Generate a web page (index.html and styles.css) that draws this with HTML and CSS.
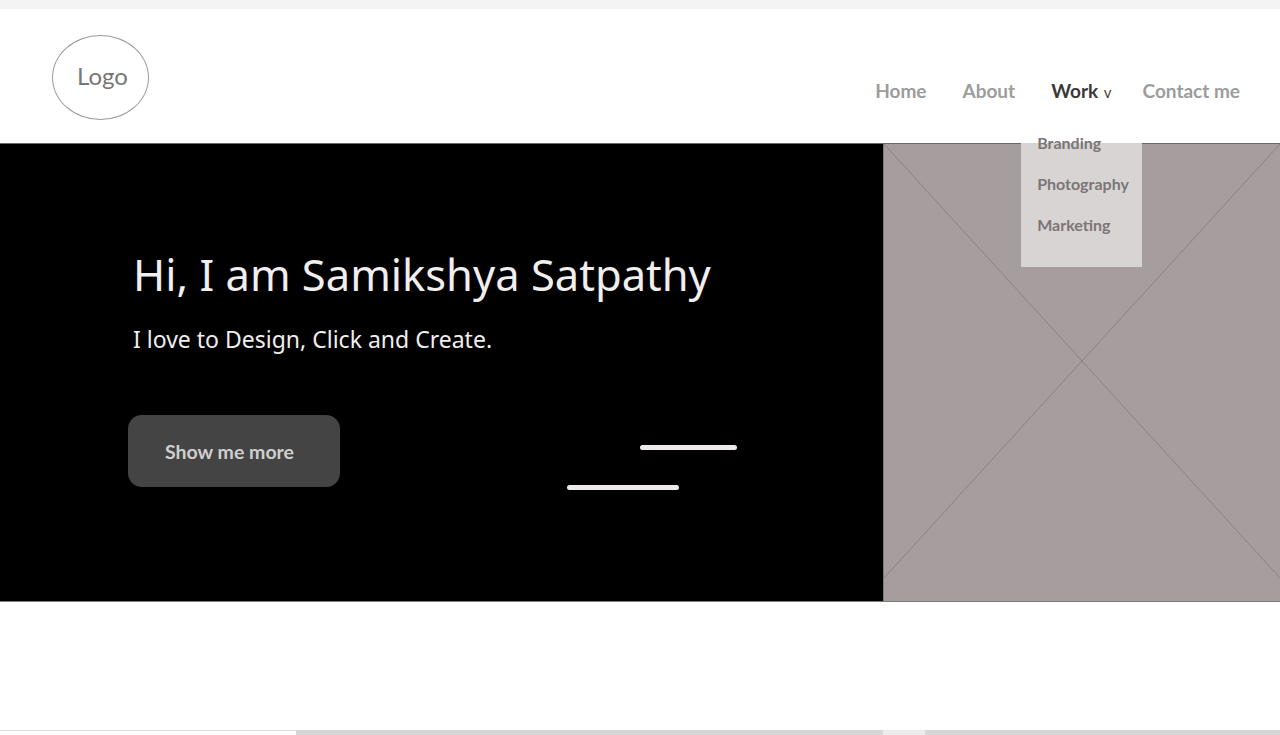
FILE: index.html
```html
<!DOCTYPE html>
<html lang="en">
<head>
<meta charset="utf-8">
<title>Samikshya Satpathy</title>
<link rel="stylesheet" href="styles.css">
</head>
<body>
<div class="topstrip"></div>
<header class="site-header">
  <div class="logo">Logo</div>
  <nav class="nav">
    <a class="nav-link" href="#">Home</a>
    <a class="nav-link" href="#">About</a>
    <div class="nav-work">
      <a class="nav-link active" href="#">Work <span class="caret">v</span></a>
      <div class="dropdown">
        <ul class="dropdown-list">
          <li>Branding</li>
          <li>Photography</li>
          <li>Marketing</li>
        </ul>
      </div>
    </div>
    <a class="nav-link" href="#">Contact me</a>
  </nav>
</header>
<section class="hero">
  <div class="hero-text">
    <h1 class="hero-title">Hi, I am Samikshya Satpathy</h1>
    <p class="hero-sub">I love to Design, Click and Create.</p>
    <div class="hero-actions">
      <button class="btn">Show me more</button>
      <div class="dashes">
        <span class="dash dash-a"></span>
        <span class="dash dash-b"></span>
      </div>
    </div>
  </div>
  <div class="placeholder">
    <svg class="ph-x" width="396" height="434" viewBox="0 0 396 434">
      <line x1="0" y1="0" x2="396" y2="434"/>
      <line x1="396" y1="0" x2="0" y2="434"/>
    </svg>
  </div>
</section>
<section class="blank"></section>
<div class="scrolltrack">
  <span class="seg seg-a"></span>
  <span class="seg seg-b"></span>
  <span class="seg seg-c"></span>
  <span class="seg seg-d"></span>
</div>
</body>
</html>
```
FILE: styles.css
```css
* { box-sizing: border-box; }
html, body { margin: 0; padding: 0; }
body {
  background: #fff;
  font-family: "Noto Sans", "Open Sans", sans-serif;
  overflow: hidden;
}
.topstrip { height: 9px; background: #f4f4f4; }

.site-header {
  height: 134px;
  display: flex;
  justify-content: space-between;
  align-items: flex-start;
  padding: 0 40px 0 52px;
  position: relative;
  z-index: 2;
}
.logo {
  margin-top: 26px;
  width: 97px;
  height: 85px;
  border: 1px solid #9a9a9a;
  border-radius: 50%;
  display: flex;
  align-items: center;
  justify-content: center;
  font-family: "Lato", sans-serif;
  font-size: 24px;
  color: #777;
  padding: 0 0 5px 4px;
}
.nav {
  display: flex;
  align-items: baseline;
  margin-top: 68px;
}
.nav-link {
  font-family: "Lato", sans-serif;
  font-weight: 700;
  font-size: 19px;
  color: #9c9c9c;
  text-decoration: none;
  line-height: 28px;
}
.nav > .nav-link + .nav-link { margin-left: 36px; }
.nav-work { margin-left: 36px; position: relative; }
.nav-work + .nav-link { margin-left: 31px; }
.nav-link.active { color: #3a3a3a; }
.caret {
  font-size: 15px;
  font-weight: 400;
  margin-left: 1px;
  color: #444;
}
.dropdown {
  position: absolute;
  left: -30px;
  top: 66px;
  width: 121px;
  height: 124px;
  background: #d8d4d4;
}
.dropdown-list {
  list-style: none;
  margin: -21px 0 0;
  padding: 0 0 0 16px;
}
.dropdown-list li {
  font-family: "Lato", sans-serif;
  font-weight: 700;
  font-size: 16px;
  line-height: 41px;
  color: #7b7676;
}

.hero {
  display: flex;
  height: 459px;
  background: #000;
  border-top: 1px solid #6a6a6a;
  border-bottom: 1px solid #7a7a7a;
  position: relative;
  z-index: 1;
}
.hero-text {
  width: 883px;
  padding: 104px 0 0 133px;
}
.hero-title {
  margin: 0;
  font-weight: 400;
  font-size: 43.5px;
  line-height: 53px;
  color: #f0eeee;
}
.hero-sub {
  margin: 24px 0 0;
  font-size: 23px;
  line-height: 29px;
  color: #f0eeee;
}
.hero-actions {
  display: flex;
  align-items: flex-start;
  margin-top: 61px;
  margin-left: -5px;
}
.btn {
  width: 212px;
  height: 72px;
  border: 0;
  border-radius: 14px;
  background: #444;
  color: #cfcfcf;
  font-family: "Lato", sans-serif;
  font-weight: 700;
  font-size: 19.5px;
  padding: 0 9px 0 0;
}
.dashes {
  margin-left: 227px;
  margin-top: 30px;
  display: flex;
  flex-direction: column;
}
.dash {
  display: block;
  height: 5px;
  border-radius: 3px;
  background: #eeeaea;
}
.dash-a { width: 97px; margin-left: 73px; }
.dash-b { width: 112px; margin-top: 35px; }

.placeholder {
  flex: 1;
  background: #a69e9e;
  border-left: 1px solid #7e7878;
  position: relative;
  overflow: hidden;
}
.ph-x { display: block; }
.ph-x line { stroke: #8a8282; stroke-width: 1; }

.blank { height: 128px; }
.scrolltrack { display: flex; height: 5px; }
.seg { display: block; height: 5px; }
.seg-a { width: 296px; background: #fff; border-top: 1px solid #dedede; }
.seg-b { width: 587px; background: #d6d6d6; }
.seg-c { width: 42px; background: #ececec; }
.seg-d { flex: 1; background: #d6d6d6; }
```
